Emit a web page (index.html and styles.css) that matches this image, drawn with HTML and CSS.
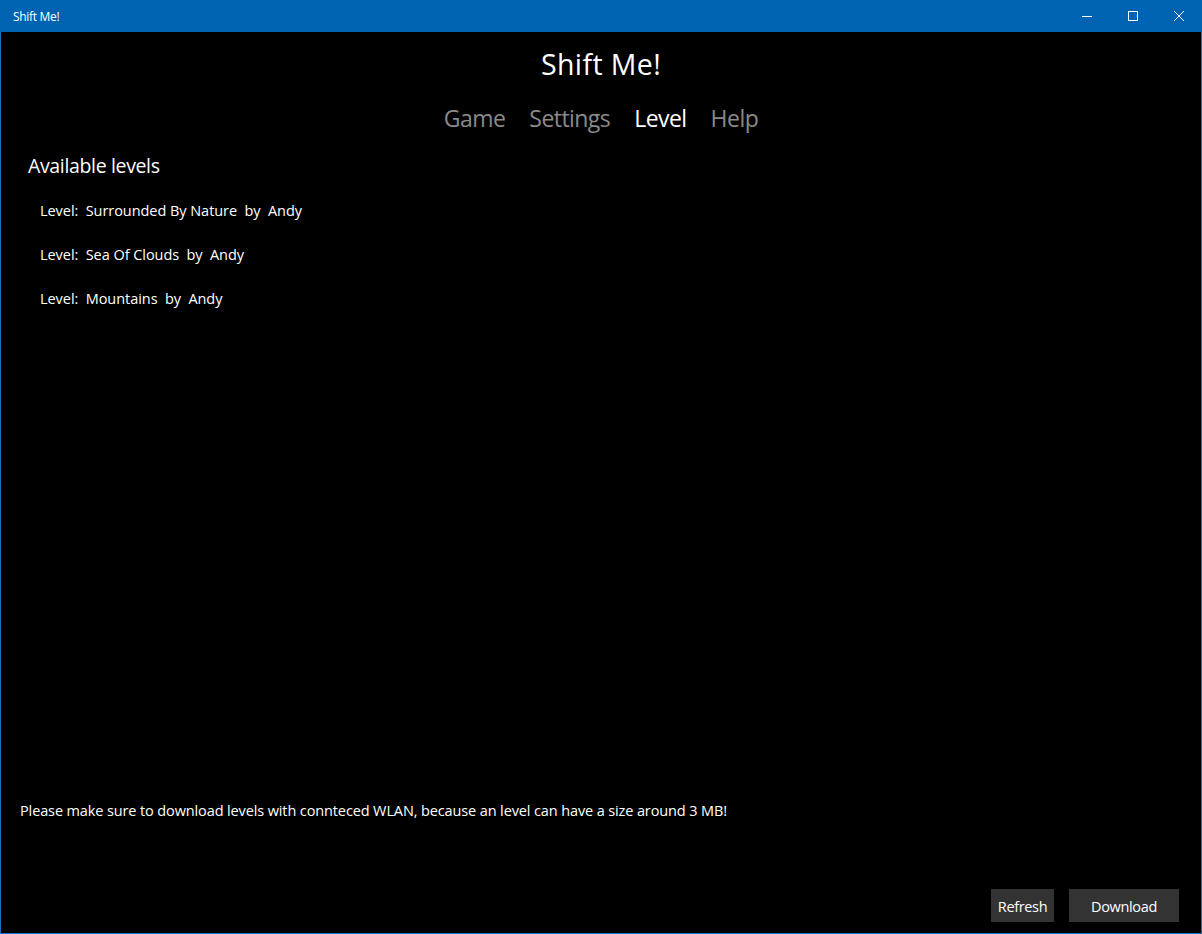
FILE: index.html
```html
<!DOCTYPE html>
<html lang="en">
<head>
    <meta charset="UTF-8">
    <title>Shift Me!</title>
    <link rel="stylesheet" href="styles.css">
</head>
<body>
    <div class="window">
        <div class="titlebar">
            <span class="title">Shift Me!</span>
            <div class="controls">
                <div class="ctrl">
                    <svg width="10" height="10" viewBox="0 0 10 10"><path d="M0 5.5h10" stroke="#fff" stroke-width="1"/></svg>
                </div>
                <div class="ctrl">
                    <svg width="10" height="10" viewBox="0 0 10 10"><rect x="0.5" y="0.5" width="9" height="9" fill="none" stroke="#fff" stroke-width="1"/></svg>
                </div>
                <div class="ctrl">
                    <svg width="10" height="10" viewBox="0 0 10 10"><path d="M0 0L10 10M10 0L0 10" stroke="#fff" stroke-width="1"/></svg>
                </div>
            </div>
        </div>

        <div class="content">
            <h1>Shift Me!</h1>
            <nav class="pivot">
                <span class="tab">Game</span>
                <span class="tab">Settings</span>
                <span class="tab active">Level</span>
                <span class="tab">Help</span>
            </nav>

            <h2>Available levels</h2>
            <ul class="levels">
                <li>Level:&nbsp; Surrounded By Nature&nbsp; by&nbsp; Andy</li>
                <li>Level:&nbsp; Sea Of Clouds&nbsp; by&nbsp; Andy</li>
                <li>Level:&nbsp; Mountains&nbsp; by&nbsp; Andy</li>
            </ul>

            <p class="note">Please make sure to download levels with connteced WLAN, because an level can have a size around 3 MB!</p>

            <div class="actions">
                <button class="btn refresh">Refresh</button>
                <button class="btn download">Download</button>
            </div>
        </div>
    </div>
</body>
</html>
```

FILE: styles.css
```css
* {
    margin: 0;
    padding: 0;
    box-sizing: border-box;
}

body {
    font-family: 'Open Sans', 'Noto Sans', sans-serif;
    background: #000;
    color: #fff;
    width: 1202px;
    height: 934px;
    overflow: hidden;
}

.window {
    width: 1202px;
    height: 934px;
    border: 1px solid #1a6fc0;
    border-top: none;
    display: flex;
    flex-direction: column;
}

.titlebar {
    height: 32px;
    background: #0063b1;
    display: flex;
    align-items: center;
    justify-content: space-between;
    margin: 0 -1px;
    flex-shrink: 0;
}

.title {
    font-size: 12px;
    padding-left: 13px;
    letter-spacing: -0.3px;
}

.controls {
    display: flex;
    height: 100%;
}

.ctrl {
    width: 46px;
    height: 100%;
    display: flex;
    align-items: center;
    justify-content: center;
}

.content {
    flex: 1;
    display: flex;
    flex-direction: column;
}

h1 {
    font-weight: 400;
    font-size: 28.5px;
    text-align: center;
    letter-spacing: 0.4px;
    margin-top: 13px;
    line-height: 38px;
}

.pivot {
    display: flex;
    justify-content: center;
    gap: 24px;
    margin-top: 19px;
}

.tab {
    font-size: 23px;
    color: #8a8a8a;
    letter-spacing: -0.55px;
    line-height: 32px;
}

.tab.active {
    color: #fff;
}

h2 {
    font-weight: 400;
    font-size: 19.5px;
    margin: 18px 0 0 27px;
    letter-spacing: -0.35px;
    line-height: 28px;
}

.levels {
    list-style: none;
    margin: 20px 0 0 39px;
    display: flex;
    flex-direction: column;
    gap: 22px;
}

.levels li {
    font-size: 14.5px;
    line-height: 22px;
    letter-spacing: -0.05px;
}

.note {
    margin-top: auto;
    margin-left: 19px;
    font-size: 14.5px;
    line-height: 22px;
    letter-spacing: -0.12px;
}

.actions {
    display: flex;
    justify-content: flex-end;
    gap: 15px;
    margin: 67px 22px 11px 0;
}

.btn {
    background: #333;
    color: #fff;
    border: none;
    font-family: inherit;
    font-size: 14.5px;
    letter-spacing: -0.35px;
    height: 33px;
    padding-top: 2px;
}

.refresh {
    width: 63px;
}

.download {
    width: 110px;
}
```
